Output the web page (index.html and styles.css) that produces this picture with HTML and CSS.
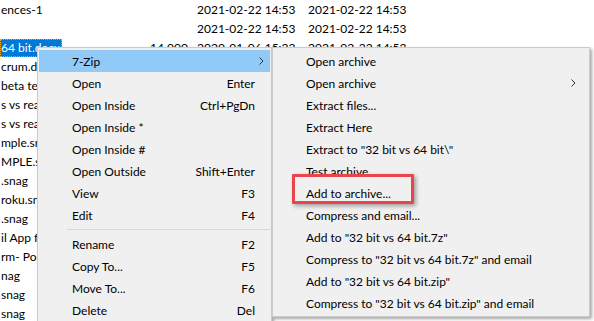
FILE: index.html
```html
<!DOCTYPE html>
<html lang="en">
<head>
  <meta charset="UTF-8">
  <title>7-Zip context menu</title>
  <link rel="stylesheet" href="styles.css">
</head>
<body>
  <div class="file-list">
    <div class="row"><span class="name">ences-1</span><span class="size"></span><span class="date">2021-02-22 14:53</span><span class="date">2021-02-22 14:53</span></div>
    <div class="row"><span class="name"></span><span class="size"></span><span class="date">2021-02-22 14:53</span><span class="date">2021-02-22 14:53</span></div>
    <div class="row"><span class="name"><span class="selected">64 bit.docx</span></span><span class="size">14 000</span><span class="date">2020-01-06 15:22</span><span class="date">2021-02-22 14:53</span></div>
    <div class="row"><span class="name">crum.docx</span></div>
    <div class="row"><span class="name">beta test</span></div>
    <div class="row"><span class="name">s vs real</span></div>
    <div class="row"><span class="name">s vs real</span></div>
    <div class="row"><span class="name">mple.snag</span></div>
    <div class="row"><span class="name">MPLE.snag</span></div>
    <div class="row"><span class="name">.snag</span></div>
    <div class="row"><span class="name">roku.snag</span></div>
    <div class="row"><span class="name">.snag</span></div>
    <div class="row"><span class="name">il App for</span></div>
    <div class="row"><span class="name">rm- Port</span></div>
    <div class="row"><span class="name">nag</span></div>
    <div class="row"><span class="name">snag</span></div>
    <div class="row"><span class="name">snag</span></div>
  </div>

  <!-- menu principal -->
  <div class="menu main-menu">
    <div class="item active"><span>7-Zip</span><svg class="arrow" width="5" height="8" viewBox="0 0 5 8"><path d="M0.5 0.5 L4 4 L0.5 7.5" fill="none" stroke="#333" stroke-width="1"/></svg></div>
    <div class="item"><span>Open</span><span class="key">Enter</span></div>
    <div class="item"><span>Open Inside</span><span class="key">Ctrl+PgDn</span></div>
    <div class="item"><span>Open Inside *</span></div>
    <div class="item"><span>Open Inside #</span></div>
    <div class="item"><span>Open Outside</span><span class="key">Shift+Enter</span></div>
    <div class="item"><span>View</span><span class="key">F3</span></div>
    <div class="item"><span>Edit</span><span class="key">F4</span></div>
    <div class="sep"></div>
    <div class="item"><span>Rename</span><span class="key">F2</span></div>
    <div class="item"><span>Copy To...</span><span class="key">F5</span></div>
    <div class="item"><span>Move To...</span><span class="key">F6</span></div>
    <div class="item"><span>Delete</span><span class="key">Del</span></div>
  </div>

  <!-- submenu 7-Zip -->
  <div class="menu sub-menu">
    <div class="item"><span>Open archive</span></div>
    <div class="item"><span>Open archive</span><svg class="arrow" width="5" height="8" viewBox="0 0 5 8"><path d="M0.5 0.5 L4 4 L0.5 7.5" fill="none" stroke="#333" stroke-width="1"/></svg></div>
    <div class="item"><span>Extract files...</span></div>
    <div class="item"><span>Extract Here</span></div>
    <div class="item"><span>Extract to "32 bit vs 64 bit\"</span></div>
    <div class="item"><span>Test archive</span></div>
    <div class="item"><span>Add to archive...</span></div>
    <div class="item"><span>Compress and email...</span></div>
    <div class="item"><span>Add to "32 bit vs 64 bit.7z"</span></div>
    <div class="item"><span>Compress to "32 bit vs 64 bit.7z" and email</span></div>
    <div class="item"><span>Add to "32 bit vs 64 bit.zip"</span></div>
    <div class="item"><span>Compress to "32 bit vs 64 bit.zip" and email</span></div>
  </div>

  <div class="callout"></div>
</body>
</html>
```

FILE: styles.css
```css
* {
  margin: 0;
  padding: 0;
  box-sizing: border-box;
}

body {
  width: 594px;
  height: 321px;
  overflow: hidden;
  position: relative;
  background: #fff;
  color: #000;
  font-family: Lato, 'Segoe UI', sans-serif;
  font-size: 12px;
}

/* lista de arquivos no fundo */
.row {
  display: grid;
  grid-template-columns: 150px 36px 111px 120px;
  height: 19px;
  line-height: 19px;
  white-space: nowrap;
}

.name {
  padding-left: 1px;
  overflow: hidden;
}

.selected {
  display: inline-block;
  height: 18px;
  line-height: 17px;
  margin-left: -1px;
  padding: 0 2px 0 1px;
  background: #0078d7;
  color: #fff;
  outline: 1px dotted #f5a623;
  outline-offset: -1px;
}

.size {
  text-align: right;
}

.date {
  padding-left: 11px;
}

/* menus */
.menu {
  position: absolute;
  background: #f0f0f0;
  border: 1px solid #cccccc;
  box-shadow: 2px 2px 3px rgba(0,0,0,0.35);
}

.main-menu {
  left: 37px;
  top: 47px;
  width: 235px;
  padding: 2px 1px 30px;
}

.sub-menu {
  left: 272px;
  top: 47px;
  width: 318px;
  padding: 2px 1px;
}

.item {
  height: 22px;
  display: flex;
  align-items: center;
  justify-content: space-between;
  padding: 0 15px 0 33px;
  white-space: nowrap;
}

.sub-menu .item {
  padding: 0 12px 0 32px;
}

.item.active {
  background: #91c9f7;
}

.main-menu .item.active {
  padding-right: 6px;
}

.arrow {
  display: block;
}

.sep {
  height: 7px;
  margin-left: 28px;
  display: flex;
  align-items: center;
}

.sep::after {
  content: '';
  display: block;
  width: 100%;
  height: 1px;
  background: #d7d7d7;
}

/* destaque vermelho */
.callout {
  position: absolute;
  left: 292px;
  top: 174px;
  width: 122px;
  height: 30px;
  border: 3px solid #e8464c;
  border-radius: 1px;
  box-shadow: 2px 2px 4px rgba(0,0,0,0.35);
}
```
